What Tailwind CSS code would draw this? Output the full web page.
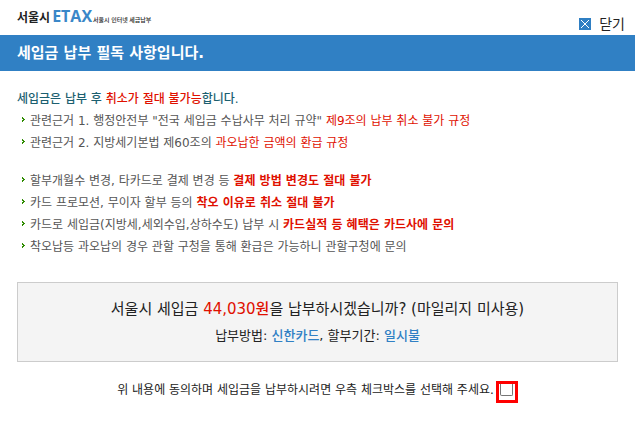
<!DOCTYPE html>
<html lang="ko">
<head>
    <meta charset="UTF-8">
    <meta name="viewport" content="width=device-width, initial-scale=1.0">
    <title>서울시 ETAX</title>
    <script src="https://cdn.jsdelivr.net/npm/@tailwindcss/browser@4"></script>
</head>
<body class="bg-white font-['DejaVu_Sans','Noto_Sans_CJK_KR',sans-serif] text-[12px] text-[#555]">
    <header>
        <div class="flex h-[35px] items-end justify-between pl-[17px] pr-[10px]">
            <a href="#" class="flex items-baseline pb-[3px] font-['Open_Sans','Noto_Sans_CJK_KR',sans-serif] leading-6 text-[#222]">
                <span class="text-[12px] font-bold">서울시</span>
                <span class="ml-[2px] text-[16px] font-bold text-[#3a87c8]">ETAX</span>
                <span class="ml-px text-[6px] font-medium text-[#222]">서울시 인터넷 세금납부</span>
            </a>
            <button type="button" class="flex items-center gap-2 pb-[2px] text-[14px] leading-[18px] text-[#222]">
                <svg class="size-3" viewBox="0 0 12 12" shape-rendering="crispEdges" aria-hidden="true">
                    <rect width="12" height="12" fill="#2f7fc3"/>
                    <path d="M2 2h1v1h1v1h1v1h2V4h1V3h1V2h1v1H9v1H8v1H7v2h1v1h1v1h1v1H9V9H8V8H7V7H5v1H4v1H3v1H2V9h1V8h1V7h1V5H4V4H3V3H2z" fill="#fff"/>
                </svg>
                닫기
            </button>
        </div>
        <h1 class="bg-[#3080c4] px-[17px] text-[15px] font-bold leading-9 text-white">세입금 납부 필독 사항입니다.</h1>
    </header>

    <main class="px-[17px] pt-[17px]">
        <p class="font-medium leading-[22px] text-[#1c5f70]">세입금은 납부 후 <span class="text-[#e01000]">취소가 절대 불가능</span>합니다.</p>
        <ul class="leading-[22px]">
            <li class="flex items-center gap-[5px] pl-[5px]">
                <svg class="mb-[3px] h-[5px] w-[3px] shrink-0" viewBox="0 0 3 5" shape-rendering="crispEdges"><path d="M0 0h1v1h1v1h1v1H2v1H1v1H0V3h1V2H0z" fill="#2e8b00"/></svg>
                <p>관련근거 1. 행정안전부 "전국 세입금 수납사무 처리 규약" <span class="text-[#e01000]">제9조의 납부 취소 불가 규정</span></p>
            </li>
            <li class="flex items-center gap-[5px] pl-[5px]">
                <svg class="mb-[3px] h-[5px] w-[3px] shrink-0" viewBox="0 0 3 5" shape-rendering="crispEdges"><path d="M0 0h1v1h1v1h1v1H2v1H1v1H0V3h1V2H0z" fill="#2e8b00"/></svg>
                <p>관련근거 2. 지방세기본법 제60조의 <span class="text-[#e01000]">과오납한 금액의 환급 규정</span></p>
            </li>
        </ul>
        <ul class="mt-4 leading-[22px]">
            <li class="flex items-center gap-[5px] pl-[5px]">
                <svg class="mb-[3px] h-[5px] w-[3px] shrink-0" viewBox="0 0 3 5" shape-rendering="crispEdges"><path d="M0 0h1v1h1v1h1v1H2v1H1v1H0V3h1V2H0z" fill="#2e8b00"/></svg>
                <p>할부개월수 변경, 타카드로 결제 변경 등 <strong class="text-[#e01000]">결제 방법 변경도 절대 불가</strong></p>
            </li>
            <li class="flex items-center gap-[5px] pl-[5px]">
                <svg class="mb-[3px] h-[5px] w-[3px] shrink-0" viewBox="0 0 3 5" shape-rendering="crispEdges"><path d="M0 0h1v1h1v1h1v1H2v1H1v1H0V3h1V2H0z" fill="#2e8b00"/></svg>
                <p>카드 프로모션, 무이자 할부 등의 <strong class="text-[#e01000]">착오 이유로 취소 절대 불가</strong></p>
            </li>
            <li class="flex items-center gap-[5px] pl-[5px]">
                <svg class="mb-[3px] h-[5px] w-[3px] shrink-0" viewBox="0 0 3 5" shape-rendering="crispEdges"><path d="M0 0h1v1h1v1h1v1H2v1H1v1H0V3h1V2H0z" fill="#2e8b00"/></svg>
                <p>카드로 세입금(지방세,세외수입,상하수도) 납부 시 <strong class="text-[#e01000]">카드실적 등 혜택은 카드사에 문의</strong></p>
            </li>
            <li class="flex items-center gap-[5px] pl-[5px]">
                <svg class="mb-[3px] h-[5px] w-[3px] shrink-0" viewBox="0 0 3 5" shape-rendering="crispEdges"><path d="M0 0h1v1h1v1h1v1H2v1H1v1H0V3h1V2H0z" fill="#2e8b00"/></svg>
                <p>착오납등 과오납의 경우 관할 구청을 통해 환급은 가능하니 관할구청에 문의</p>
            </li>
        </ul>

        <section class="mt-6 border border-[#ccc] bg-[#f4f4f4] py-3 text-center text-[#222]">
            <p class="text-[15px] leading-[28px]">서울시 세입금 <span class="font-medium text-[#e01000]">44,030원</span>을 납부하시겠습니까? (마일리지 미사용)</p>
            <p class="text-[13px] leading-[26px]">납부방법: <span class="font-medium text-[#3080c4]">신한카드</span>, 할부기간: <span class="font-medium text-[#3080c4]">일시불</span></p>
        </section>

        <div class="mt-[19px] flex items-start justify-center gap-[2px] text-[#222]">
            <label for="agree" class="leading-[18px]">위 내용에 동의하며 세입금을 납부하시려면 우측 체크박스를 선택해 주세요.</label>
            <span class="flex size-[22px] items-start justify-center border-3 border-[#f00]">
                <input id="agree" type="checkbox" class="h-3 w-[13px] appearance-none rounded-b-[2px] border border-t-0 border-[#767676] bg-white checked:bg-[#3080c4]">
            </span>
        </div>
    </main>
</body>
</html>
